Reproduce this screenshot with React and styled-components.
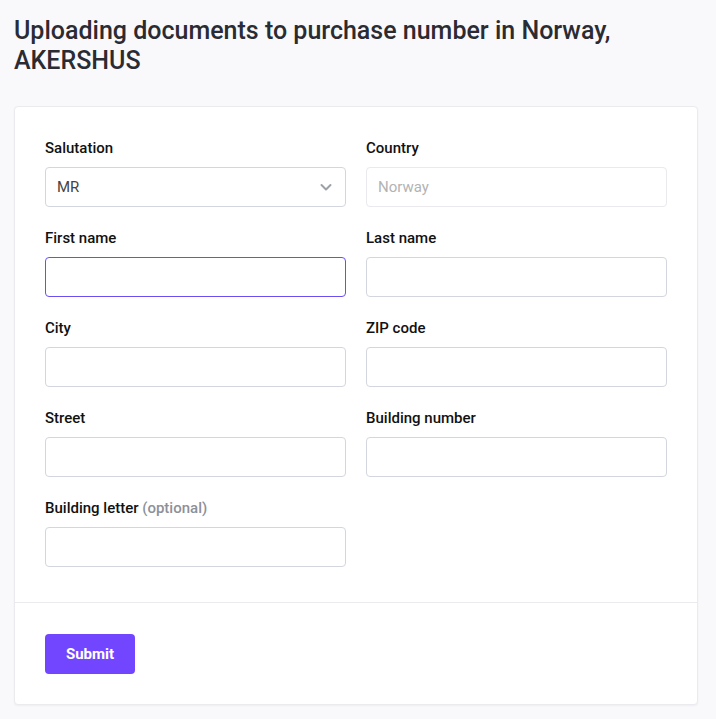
import React from "react";
import styled, { createGlobalStyle } from "styled-components";

const GlobalStyle = createGlobalStyle`
  body {
    margin: 0;
    background: #f9f9fb;
    font-family: Roboto, "Liberation Sans", sans-serif;
    color: #111;
  }
`;

const Page = styled.main`
  padding: 16px 18px 14px 14px;
  box-sizing: border-box;
`;

const Title = styled.h1`
  margin: 0 0 30px;
  font-size: 25px;
  line-height: 30px;
  font-weight: 500;
  color: #2b2b33;
`;

const Card = styled.form`
  background: #fff;
  border: 1px solid #ebebef;
  border-radius: 4px;
  box-shadow: 0 1px 2px rgba(30, 30, 60, 0.05);
`;

const Fields = styled.div`
  display: grid;
  grid-template-columns: 1fr 1fr;
  column-gap: 20px;
  row-gap: 21px;
  padding: 31px 30px 35px;
`;

const Field = styled.div`
  display: flex;
  flex-direction: column;
`;

const Label = styled.label`
  font-size: 15px;
  line-height: 20px;
  font-weight: 500;
  color: #111;
  margin-bottom: 9px;
`;

const Hint = styled.span`
  color: #8d9099;
`;

const Input = styled.input`
  height: 40px;
  box-sizing: border-box;
  border: 1px solid ${(p) => (p.$focused ? "#6b4ff2" : "#d3d6de")};
  border-radius: 4px;
  padding: 0 11px;
  font-family: inherit;
  font-size: 15px;
  color: #444;
  background: #fff;
  outline: none;
  &:disabled {
    border-color: #e9e9ee;
    color: #b3b3b3;
    background: #fff;
  }
`;

const SelectBox = styled.div`
  display: flex;
  align-items: center;
  justify-content: space-between;
  height: 40px;
  box-sizing: border-box;
  border: 1px solid #d3d6de;
  border-radius: 4px;
  padding: 0 12px 0 11px;
  font-size: 15px;
  color: #444;
`;

const Footer = styled.div`
  border-top: 1px solid #ebebef;
  padding: 31px 30px 30px;
`;

const Button = styled.button`
  height: 40px;
  width: 90px;
  border: none;
  border-radius: 4px;
  background: #7246ff;
  color: #fff;
  font-family: inherit;
  font-size: 15px;
  font-weight: 700;
  cursor: pointer;
`;

const Chevron = () => (
  <svg width="14" height="14" viewBox="0 0 14 14" fill="none">
    <path d="M2.5 5l4.5 4.5L11.5 5" stroke="#9ca0a8" strokeWidth="2" strokeLinecap="round" strokeLinejoin="round" />
  </svg>
);

const App = () => {
  return (
    <Page>
      <GlobalStyle />
      <Title>Uploading documents to purchase number in Norway, AKERSHUS</Title>
      <Card onSubmit={(e) => e.preventDefault()}>
        <Fields>
          <Field>
            <Label>Salutation</Label>
            <SelectBox>
              MR
              <Chevron />
            </SelectBox>
          </Field>
          <Field>
            <Label>Country</Label>
            <Input disabled value="Norway" readOnly />
          </Field>
          <Field>
            <Label>First name</Label>
            <Input $focused />
          </Field>
          <Field>
            <Label>Last name</Label>
            <Input />
          </Field>
          <Field>
            <Label>City</Label>
            <Input />
          </Field>
          <Field>
            <Label>ZIP code</Label>
            <Input />
          </Field>
          <Field>
            <Label>Street</Label>
            <Input />
          </Field>
          <Field>
            <Label>Building number</Label>
            <Input />
          </Field>
          <Field>
            <Label>
              Building letter <Hint>(optional)</Hint>
            </Label>
            <Input />
          </Field>
        </Fields>
        <Footer>
          <Button type="submit">Submit</Button>
        </Footer>
      </Card>
    </Page>
  );
};

export default App;
